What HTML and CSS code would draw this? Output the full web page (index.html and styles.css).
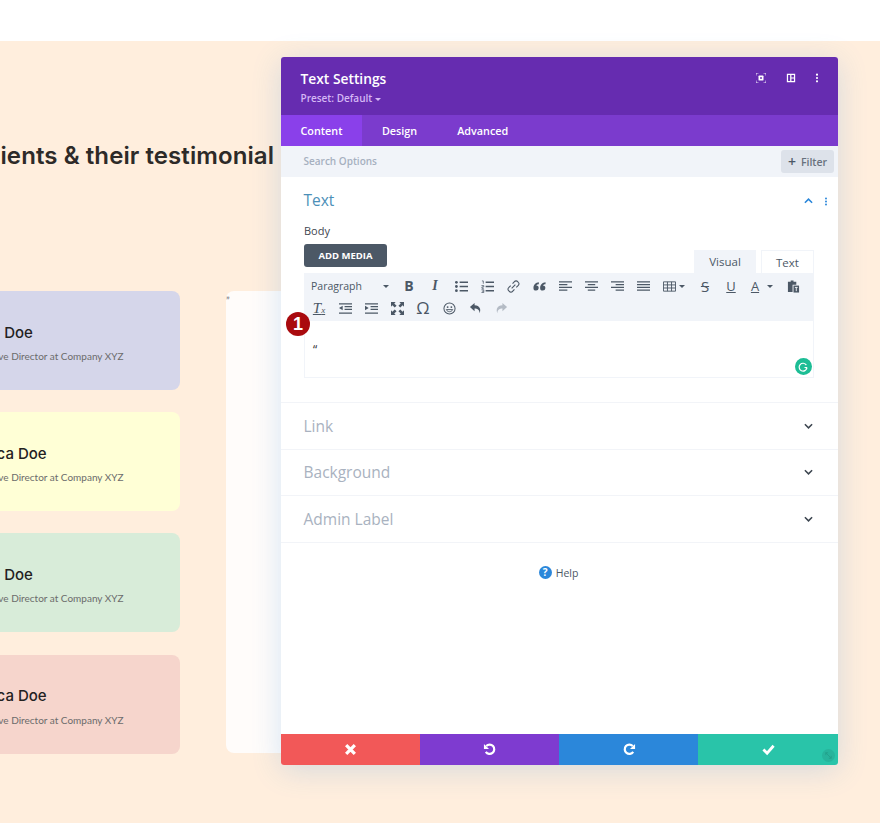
FILE: index.html
```html
<!DOCTYPE html>
<html lang="en">
<head>
<meta charset="utf-8">
<title>Text Settings</title>
<link rel="stylesheet" href="styles.css">
</head>
<body>
<div class="topbar"></div>
<main class="page">
  <h2 class="heading">Our clients &amp; their testimonial</h2>
  <div class="columns">
    <div class="cards">
      <div class="card lilac"><h4>John Doe</h4><p>Executive Director at Company XYZ</p></div>
      <div class="card yellow"><h4 class="long">Jessica Doe</h4><p>Executive Director at Company XYZ</p></div>
      <div class="card green"><h4>John Doe</h4><p>Executive Director at Company XYZ</p></div>
      <div class="card rose"><h4 class="long">Jessica Doe</h4><p>Executive Director at Company XYZ</p></div>
    </div>
    <div class="quote-panel">”</div>
  </div>
</main>

<section class="modal">
  <header class="modal-head">
    <div>
      <h1>Text Settings</h1>
      <div class="preset">Preset: Default <i class="caret"></i></div>
    </div>
    <div class="head-icons">
      <svg viewBox="0 0 12 12" class="hi"><path d="M0 3V0h3M9 0h3v3M12 9v3H9M3 12H0V9" fill="none" stroke="#fff" stroke-width="1"/><rect x="3" y="3" width="6" height="6" rx="1" fill="#fff"/><rect x="5" y="5" width="2" height="2" fill="#662cb0"/></svg>
      <svg viewBox="0 0 12 12" class="hi"><path fill-rule="evenodd" d="M1 1h10v10H1zM2.500 2.500v7H5v-7zM6.500 2.500V5.500h3v-3zM6.500 6.500v3h3v-3z" fill="#fff"/></svg>
      <svg viewBox="0 0 4 12" class="hi narrow"><circle cx="2" cy="2" r="1.300" fill="#fff"/><circle cx="2" cy="6" r="1.300" fill="#fff"/><circle cx="2" cy="10" r="1.300" fill="#fff"/></svg>
    </div>
  </header>
  <nav class="tabs">
    <span class="tab active">Content</span><span class="tab">Design</span><span class="tab">Advanced</span>
  </nav>
  <div class="search">
    <span>Search Options</span>
    <span class="filter"><b>+</b>Filter</span>
  </div>
  <div class="modal-body">
    <div class="section open">
      <div class="sec-head">
        <h3>Text</h3>
        <div class="sec-tools">
          <svg viewBox="0 0 10 6" class="chev"><path d="M1 5l4-4 4 4" fill="none" stroke="#2b87da" stroke-width="1.700"/></svg>
          <svg viewBox="0 0 4 12" class="dots"><circle cx="2" cy="2" r="1.300" fill="#2b87da"/><circle cx="2" cy="6" r="1.300" fill="#2b87da"/><circle cx="2" cy="10" r="1.300" fill="#2b87da"/></svg>
        </div>
      </div>
      <div class="label">Body</div>
      <div class="media-row">
        <span class="add-media">ADD MEDIA</span>
        <div class="mode-tabs"><span class="mode visual">Visual</span><span class="mode text">Text</span></div>
      </div>
      <div class="editor">
        <div class="toolbar">
          <div class="tb-row">
            <span class="format">Paragraph<i class="caret dark"></i></span>
            <span class="tb bold">B</span>
            <span class="tb ital">I</span>
            <span class="tb"><svg viewBox="0 0 14 14"><path d="M5 2.500h9M5 7h9M5 11.500h9" stroke="#4c5866" stroke-width="1.600"/><circle cx="1.500" cy="2.500" r="1.500" fill="#4c5866"/><circle cx="1.500" cy="7" r="1.500" fill="#4c5866"/><circle cx="1.500" cy="11.500" r="1.500" fill="#4c5866"/></svg></span>
            <span class="tb"><svg viewBox="0 0 14 14"><path d="M5 2.500h9M5 7h9M5 11.500h9" stroke="#4c5866" stroke-width="1.600"/><path d="M1 1h1.500v3M.5 6h2.500v1.500H1V9h2M.5 10.500H3v3H.5M1 12h2" fill="none" stroke="#4c5866" stroke-width=".8"/></svg></span>
            <span class="tb"><svg viewBox="0 0 14 14"><path d="M6 4l2-2.200a2.200 2.200 0 0 1 3.500 0l.7.700a2.200 2.200 0 0 1 0 3.300L10 8M8 10l-2 2.200a2.200 2.200 0 0 1-3.500 0l-.7-.7a2.200 2.200 0 0 1 0-3.300L4 6M5 9l4-4" fill="none" stroke="#4c5866" stroke-width="1.200"/></svg></span>
            <span class="tb"><svg viewBox="0 0 14 14"><path d="M6.300 2.500C3 3 .5 5 .5 8.500a2.800 2.800 0 1 0 3-2.700C4 5 5.200 4.500 6.300 4.500zM13.500 2.500C10.200 3 7.700 5 7.700 8.500a2.800 2.800 0 1 0 3-2.700c.5-.8 1.700-1.300 2.800-1.300z" fill="#4c5866"/></svg></span>
            <span class="tb"><svg viewBox="0 0 14 14"><path d="M0 2h14M0 5h9M0 8h14M0 11h9" stroke="#4c5866" stroke-width="1.400"/></svg></span>
            <span class="tb"><svg viewBox="0 0 14 14"><path d="M0 2h14M3 5h8M0 8h14M3 11h8" stroke="#4c5866" stroke-width="1.400"/></svg></span>
            <span class="tb"><svg viewBox="0 0 14 14"><path d="M0 2h14M5 5h9M0 8h14M5 11h9" stroke="#4c5866" stroke-width="1.400"/></svg></span>
            <span class="tb"><svg viewBox="0 0 14 14"><path d="M0 2h14M0 5h14M0 8h14M0 11h14" stroke="#4c5866" stroke-width="1.400"/></svg></span>
            <span class="tb tb-wide table"><svg viewBox="0 0 14 12"><path fill="none" stroke="#4c5866" d="M.5 1h13v10H.5zM.5 4.300h13M.5 7.600h13M4.800 1v10M9.200 1v10"/></svg><i class="caret dark"></i></span>
            <span class="tb strike">S</span>
            <span class="tb under">U</span>
            <span class="tb tb-wide color"><span class="under-a">A</span><i class="caret dark"></i></span>
            <span class="tb"><svg viewBox="0 0 14 14"><path d="M1 2h3V.5h3V2h3v3H6v8H1z" fill="#4c5866"/><path d="M7 6h6v7.500H7z" fill="#4c5866"/><path d="M8.500 8h3M10 8v4" stroke="#f1f4f9" stroke-width="1"/></svg></span>
          </div>
          <div class="tb-row second">
            <span class="tb clear"><span>T</span><small>x</small></span>
            <span class="tb"><svg viewBox="0 0 14 14"><path d="M0 2h14M6 5h8M6 8h8M0 12h14" stroke="#4c5866" stroke-width="1.400"/><path d="M4 4v5L0 6.500z" fill="#4c5866"/></svg></span>
            <span class="tb"><svg viewBox="0 0 14 14"><path d="M0 2h14M6 5h8M6 8h8M0 12h14" stroke="#4c5866" stroke-width="1.400"/><path d="M0 4v5l4-2.500z" fill="#4c5866"/></svg></span>
            <span class="tb"><svg viewBox="0 0 14 14"><path fill="#4c5866" d="M0 0h5L3.500 1.500 6 4 4 6 1.500 3.500 0 5zM14 0v5l-1.500-1.500L10 6 8 4l2.500-2.500L9 0zM0 14V9l1.500 1.500L4 8l2 2-2.500 2.500L5 14zM14 14H9l1.500-1.500L8 10l2-2 2.500 2.500L14 9z"/></svg></span>
            <span class="tb omega">Ω</span>
            <span class="tb"><svg viewBox="0 0 14 14"><circle cx="7" cy="7" r="6" fill="none" stroke="#4c5866" stroke-width="1.100"/><circle cx="5" cy="5.500" r="1" fill="#4c5866"/><circle cx="9" cy="5.500" r="1" fill="#4c5866"/><path d="M3.500 8.200c1.500 3 5.500 3 7 0z" fill="none" stroke="#4c5866"/></svg></span>
            <span class="tb"><svg viewBox="0 0 14 14"><path d="M6 1L1 5.500 6 10V7c3 0 5 1 5.500 5 1.500-4 .5-8.200-5.500-8.500z" fill="#4c5866"/></svg></span>
            <span class="tb"><svg viewBox="0 0 14 14"><path d="M8 1l5 4.500L8 10V7C5 7 3 8 2.500 12 1 8 2 3.800 8 3.500z" fill="#b4bbc5"/></svg></span>
          </div>
        </div>
        <div class="editor-area">
          “
          <span class="grammarly"><svg viewBox="0 0 16 16"><path d="M12.500 5.500A5.200 5.200 0 1 0 13.200 9" fill="none" stroke="#fff" stroke-width="1.600"/><path d="M9 8h4.500v3z" fill="#fff"/></svg></span>
        </div>
      </div>
    </div>
    <div class="section"><h3>Link</h3><svg viewBox="0 0 10 6" class="chev"><path d="M1 1l4 4 4-4" fill="none" stroke="#3d4650" stroke-width="1.700"/></svg></div>
    <div class="section"><h3>Background</h3><svg viewBox="0 0 10 6" class="chev"><path d="M1 1l4 4 4-4" fill="none" stroke="#3d4650" stroke-width="1.700"/></svg></div>
    <div class="section"><h3>Admin Label</h3><svg viewBox="0 0 10 6" class="chev"><path d="M1 1l4 4 4-4" fill="none" stroke="#3d4650" stroke-width="1.700"/></svg></div>
    <div class="help"><span class="help-icon">?</span>Help</div>
  </div>
  <footer class="actions">
    <span class="act red"><svg viewBox="0 0 12 12"><path d="M2 2l8 8M10 2l-8 8" stroke="#fff" stroke-width="3"/></svg></span>
    <span class="act purple"><svg viewBox="0 0 14 14"><path d="M3.500 3.200A5 5 0 1 1 3 9.500" fill="none" stroke="#fff" stroke-width="2.400"/><path d="M1 1v5.500h5.500z" fill="#fff"/></svg></span>
    <span class="act blue"><svg class="redo" viewBox="0 0 14 14"><path d="M10.500 3.200A5 5 0 1 0 11 9.500" fill="none" stroke="#fff" stroke-width="2.400"/><path d="M13 1v5.500H7.500z" fill="#fff"/></svg></span>
    <span class="act teal"><svg viewBox="0 0 14 12"><path d="M1.500 6l4 4 7-8" fill="none" stroke="#fff" stroke-width="3"/></svg><i class="resize"><svg viewBox="0 0 10 10"><path d="M2 2l6 6M2 2h2.500M2 2v2.500M8 8H5.500M8 8V5.500" fill="none" stroke="#22a08a"/></svg></i></span>
  </footer>
</section>
<div class="badge">1</div>
</body>
</html>
```
FILE: styles.css
```css
* { box-sizing: border-box; }
html, body { margin: 0; padding: 0; }
body {
  width: 880px;
  height: 823px;
  overflow: hidden;
  position: relative;
  background: #fff;
  font-family: "Open Sans", "Liberation Sans", sans-serif;
}
.topbar { height: 41px; background: #fff; }
.page {
  height: 782px;
  background: #ffeedd;
  padding-top: 99px;
  overflow: hidden;
}
.heading {
  margin: 0;
  width: 274px;
  height: 32px;
  display: flex;
  justify-content: flex-end;
  white-space: nowrap;
  font: 600 24px/32px Inter, "Liberation Sans", sans-serif;
  letter-spacing: .08px;
  color: #2d2a28;
}
.columns {
  display: flex;
  margin-top: 119px;
  margin-left: -240px;
}
.cards {
  width: 420px;
  display: flex;
  flex-direction: column;
  gap: 22.200px;
}
.card {
  height: 99px;
  border-radius: 8px;
  padding: 31.500px 0 0 206px;
}
.card h4 {
  margin: 0 0 0 -1.600px;
  font: 500 15px/20px Inter, "Liberation Sans", sans-serif;
  color: #23211f;
}
.card h4.long { margin-left: -6.800px; }
.card p {
  margin: 4.500px 0 0;
  font: 400 10px/18px Lato, "Liberation Sans", sans-serif;
  color: #6b6b6b;
}
.lilac { background: #d5d6ea; }
.yellow { background: #ffffd6; }
.green { background: #d8ecd9; }
.rose { background: #f6d5cc; }
.quote-panel {
  width: 120px;
  height: 462px;
  margin-left: 46px;
  background: #fffcfa;
  border-radius: 8px;
  padding: 2px 0 0 0;
  font: 400 10px/14px Lato, sans-serif;
  color: #666;
}
.modal {
  position: absolute;
  left: 281px;
  top: 57px;
  width: 557px;
  height: 708px;
  display: flex;
  flex-direction: column;
  background: #fff;
  border-radius: 3px;
  overflow: hidden;
  box-shadow: 0 5px 30px rgba(43, 135, 218, .2);
}
.modal-head {
  height: 58px;
  flex: none;
  background: #662cb0;
  display: flex;
  justify-content: space-between;
  padding: 13px 19px 0 19.500px;
}
.modal-head h1 {
  margin: 0;
  font: 600 13.800px/18px "Open Sans", sans-serif;
  color: #fff;
}
.preset {
  margin-top: 2px;
  font: 600 10px/16px "Open Sans", sans-serif;
  color: #d5b8f5;
}
.caret {
  display: inline-block;
  border: 3px solid transparent;
  border-top-color: #d5b8f5;
  border-bottom: 0;
  vertical-align: middle;
}
.caret.dark { border-top-color: #4c5866; }
.head-icons { display: flex; align-items: flex-start; gap: 19.500px; padding-top: 3px; }
.hi { width: 10px; height: 10px; display: block; }
.hi.narrow { width: 4px; }
.tabs {
  height: 31px;
  flex: none;
  background: #7b3bcd;
  display: flex;
}
.tab {
  font: 600 10.800px/31px "Open Sans", sans-serif;
  color: #fff;
  padding: 0 20px;
}
.tab.active { background: #8a40ea; padding: 0 19.500px; }
.search {
  height: 31px;
  flex: none;
  background: #f1f4f9;
  display: flex;
  align-items: center;
  justify-content: space-between;
  padding: 0 4px 0 22.500px;
  font: 600 10px/15px "Open Sans", sans-serif;
  color: #a6b0bf;
}
.search > span:first-child { margin-top: -1px; }
.filter {
  width: 53px;
  height: 23px;
  margin-top: -1px;
  background: #dde2ea;
  border-radius: 3px;
  color: #68717d;
  font: 600 10.500px/23px "Open Sans", sans-serif;
  text-align: center;
}
.filter b { font-size: 14px; font-weight: 600; vertical-align: -1px; color: #4c5866; margin-right: 5px; }
.modal-body { flex: 1; min-height: 0; }
.section {
  height: 46.500px;
  border-bottom: 1px solid #f2f4f8;
  padding: 0 24px 0 22.500px;
  display: flex;
  align-items: center;
  justify-content: space-between;
}
.section h3 {
  margin: 0;
  font: 400 15.500px/24px "Open Sans", sans-serif;
  color: #a9b2c0;
}
.section .chev { margin-right: 1px; }
.chev { width: 9px; height: 6px; display: block; }
.dots { width: 4px; height: 9px; display: block; }
.section.open {
  height: 226px;
  display: block;
  padding: 11px 24px 0 22.500px;
}
.section.open h3 { color: #4c8fb8; }
.sec-head { display: flex; justify-content: space-between; align-items: center; }
.sec-tools { display: flex; align-items: center; gap: 10px; margin-right: -14px; padding-top: 2px; }
.label {
  margin-top: 11px;
  margin-left: .5px;
  font: 400 11px/16px "Open Sans", sans-serif;
  color: #3f4650;
}
.media-row {
  display: flex;
  justify-content: space-between;
  align-items: flex-end;
  margin-top: 5px;
  margin-left: .5px;
  height: 29px;
}
.add-media {
  width: 83px;
  height: 23px;
  align-self: flex-start;
  background: #4c5866;
  border-radius: 3px;
  color: #fff;
  text-align: center;
  font: 700 9.500px/23px "Open Sans", sans-serif;
}
.mode-tabs { display: flex; gap: 5px; }
.mode {
  height: 23px;
  font: 400 11.500px/24px "Open Sans", sans-serif;
  color: #4c5866;
  text-align: center;
}
.mode.visual { width: 62px; background: #f1f4f9; }
.mode.text { width: 53px; background: #fff; border: 1px solid #f1f4f9; border-bottom: 0; }
.editor { border: 1px solid #f1f4f9; border-top: 0; margin-left: .5px; }
.toolbar { height: 48px; background: #f1f4f9; padding-top: 2px; margin: 0 -1px; }
.tb-row { display: flex; height: 22px; align-items: center; }
.tb-row.second { padding-left: 2px; }
.format {
  width: 92px;
  padding-left: 7px;
  position: relative;
  font: 400 10.500px/22px "Open Sans", sans-serif;
  color: #4c5866;
}
.format .caret { position: absolute; left: 79px; top: 10px; }
.tb {
  width: 26px;
  height: 22px;
  flex: none;
  display: flex;
  align-items: center;
  justify-content: center;
  color: #4c5866;
  gap: 3px;
}
.tb svg { width: 13px; height: 13px; display: block; }
.tb-wide { width: 36px; }
.tb.bold { font: 700 14px/22px "Open Sans", sans-serif; }
.tb.ital { font: italic 700 14px/22px "Liberation Serif", serif; }
.tb.strike { font: 400 15px/22px "Open Sans", sans-serif; text-decoration: line-through; }
.tb.under { font: 400 13px/22px "Open Sans", sans-serif; text-decoration: underline; }
.under-a { font: 400 13px/22px "Open Sans", sans-serif; text-decoration: underline; margin-right: 5px; }
.tb.omega { font: 400 17px/22px "Open Sans", sans-serif; }
.clear { gap: 0; align-items: baseline; font: italic 400 15px/22px "Liberation Serif", serif; text-decoration: underline; }
.clear small { font-size: 9px; }
.editor-area {
  height: 56px;
  padding: 20px 0 0 8px;
  position: relative;
  font: 400 12px/18px "Open Sans", sans-serif;
  color: #333;
}
.grammarly {
  position: absolute;
  right: 1.500px;
  bottom: 2px;
  width: 17px;
  height: 17px;
  border-radius: 50%;
  background: #1cbd95;
  display: flex;
  align-items: center;
  justify-content: center;
}
.grammarly svg { width: 12px; height: 12px; display: block; }
.help {
  display: flex;
  justify-content: center;
  align-items: center;
  gap: 4px;
  margin-top: 21px;
  padding-right: 2px;
  font: 400 10.500px/18px "Open Sans", sans-serif;
  color: #4c5866;
}
.help-icon {
  width: 13px;
  height: 13px;
  border-radius: 50%;
  background: #2b87da;
  color: #fff;
  text-align: center;
  font: 700 10px/13px "Open Sans", sans-serif;
}
.actions { height: 31px; flex: none; display: flex; }
.act {
  flex: none;
  width: 139px;
  display: flex;
  align-items: center;
  justify-content: center;
  position: relative;
}
.act svg { width: 13px; height: 13px; display: block; }
.act svg.redo { margin-left: 1px; }
.red { background: #f25858; }
.purple { background: #7e3bd0; }
.blue { background: #2b87da; }
.teal { background: #29c4a9; flex: 1; }
.resize {
  position: absolute;
  right: 3px;
  bottom: 3px;
  width: 13px;
  height: 13px;
  border-radius: 50%;
  background: #27b49c;
  display: flex;
  align-items: center;
  justify-content: center;
}
.resize svg { width: 9px; height: 9px; }
.badge {
  position: absolute;
  left: 286px;
  top: 312px;
  width: 24px;
  height: 24px;
  border-radius: 50%;
  background: #a90a0e;
  color: #fff;
  text-align: center;
  font: 700 18px/24px "Liberation Sans", sans-serif;
}
```
